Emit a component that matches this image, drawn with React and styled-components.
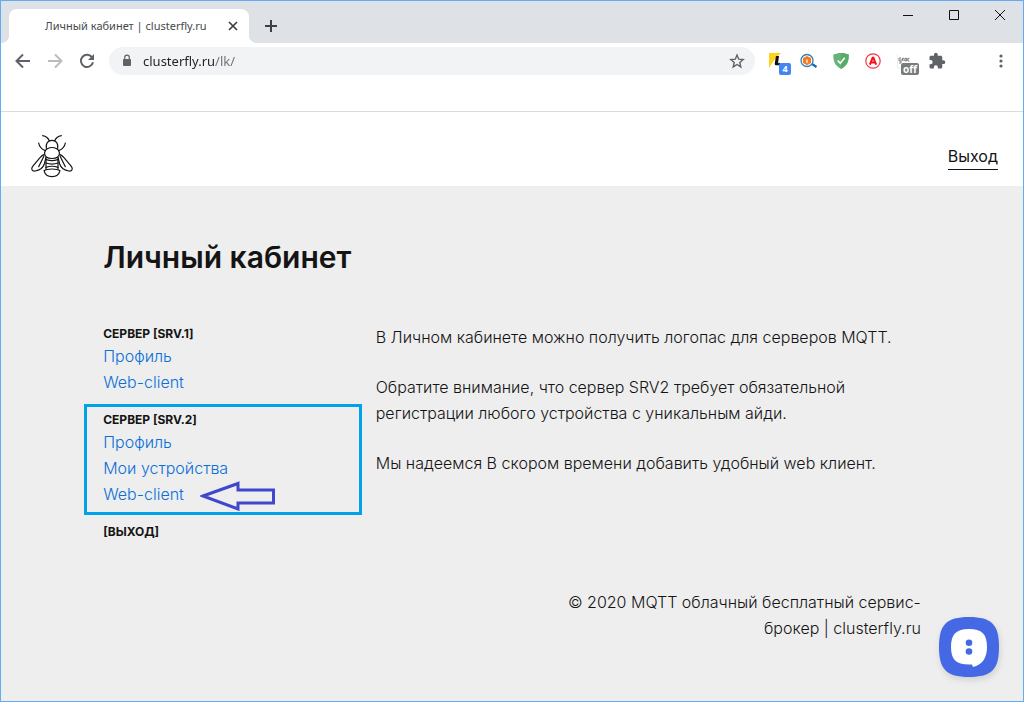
import React from 'react';
import styled, { createGlobalStyle } from 'styled-components';

const GlobalStyle = createGlobalStyle`
  *, *::before, *::after { box-sizing: border-box; }
  body { margin: 0; background: #eeeeee; }
  button { border: 0; padding: 0; background: none; font: inherit; color: inherit; cursor: pointer; }
  svg { display: block; }
`;

const chromeFont = '"Noto Sans", "Open Sans", sans-serif';

const Window = styled.div`
  display: flex;
  flex-direction: column;
  min-height: 100vh;
  border: 1px solid #62acf3;
  background: #eeeeee;
`;

const TabStrip = styled.div`
  display: flex;
  height: 42px;
  padding: 8px 0 0 8px;
  background: #dee1e6;
  font-family: ${chromeFont};
`;

const Tab = styled.div`
  position: relative;
  display: flex;
  align-items: center;
  justify-content: space-between;
  width: 240px;
  padding: 0 8px 0 36px;
  border-radius: 8px 8px 0 0;
  background: #ffffff;
  color: #45494d;
  font-size: 11px;
  line-height: 16px;
  white-space: nowrap;

  &::before, &::after {
    content: '';
    position: absolute;
    bottom: 0;
    width: 8px;
    height: 8px;
  }
  &::before {
    right: 100%;
    background: radial-gradient(circle at 0 0, transparent 8px, #ffffff 8px);
  }
  &::after {
    left: 100%;
    background: radial-gradient(circle at 100% 0, transparent 8px, #ffffff 8px);
  }
`;

const IconButton = styled.button`
  display: flex;
  align-items: center;
  justify-content: center;
  flex: none;
  width: ${p => p.$width || 32}px;
  height: ${p => p.$height || 28}px;
`;

const TabClose = styled(IconButton)`
  width: 16px;
  height: 16px;
`;

const NewTab = styled(IconButton)`
  width: 28px;
  height: 34px;
  margin-left: 8px;
`;

const WindowControls = styled.div`
  display: flex;
  margin: -8px 0 0 auto;
`;

const Toolbar = styled.div`
  display: flex;
  align-items: center;
  height: 68px;
  padding: 0 6px 32px;
  background: #ffffff;
  font-family: ${chromeFont};
`;

const AddressBar = styled.label`
  display: flex;
  align-items: center;
  flex: 1;
  min-width: 0;
  height: 28px;
  margin-left: 6px;
  padding: 0 2px 0 12px;
  border-radius: 14px;
  background: #f1f3f4;
`;

const AddressInput = styled.input`
  flex: 1;
  min-width: 0;
  margin-left: 10px;
  padding: 0;
  border: 0;
  outline: 0;
  font-family: inherit;
  font-size: 13px;
  line-height: 20px;
  color: transparent;
  background: linear-gradient(90deg, #202124 72px, #6b7075 72px);
  background-clip: text;
  -webkit-background-clip: text;
`;

const Extensions = styled.div`
  display: flex;
  margin-left: 6px;
`;

const ExtensionButton = styled(IconButton)`
  position: relative;
`;

const Badge = styled.span`
  position: absolute;
  left: ${p => (p.$wide ? 12 : 18)}px;
  bottom: 0;
  min-width: 12px;
  height: 12px;
  padding: 0 2px;
  border-radius: 2px;
  background: ${p => p.$color};
  color: #ffffff;
  font-family: "Open Sans", sans-serif;
  font-size: ${p => (p.$wide ? 10 : 9)}px;
  font-weight: 700;
  line-height: 12px;
`;

const MenuButton = styled(IconButton)`
  margin-left: 32px;
`;

const SiteHeader = styled.header`
  display: flex;
  align-items: center;
  justify-content: space-between;
  height: 75px;
  padding: 14px 25px 0 29px;
  border-top: 1px solid #d9dbde;
  background: #ffffff;
`;

const ExitLink = styled.a`
  border-bottom: 1px solid #141414;
  color: #141414;
  font-family: Inter, sans-serif;
  font-size: 16px;
  line-height: 26px;
  text-decoration: none;
`;

const Page = styled.div`
  padding: 52px 10% 32px;
  color: #141414;
  font-family: Inter, sans-serif;
  font-size: 16px;
  font-weight: 300;
  line-height: 26px;
`;

const Title = styled.h1`
  margin: 0 0 48px;
  font-size: 30px;
  font-weight: 600;
  line-height: 38px;
`;

const Columns = styled.div`
  display: grid;
  grid-template-columns: 1fr 2fr;
`;

const SideNav = styled.nav`
  display: flex;
  flex-direction: column;
  gap: 15px;
`;

const NavGroup = styled.section`
  position: relative;
`;

const NavHeading = styled.h2`
  margin: 0;
  font-size: 12px;
  font-weight: 700;
  line-height: 19px;
`;

const NavList = styled.ul`
  margin: 0;
  padding: 0;
  list-style: none;
`;

const NavLink = styled.a`
  color: #0b6fd8;
  text-decoration: none;
`;

const PlainLink = styled.a`
  color: inherit;
  text-decoration: none;
`;

const Highlight = styled.div`
  position: absolute;
  inset: -6px 14px -8px -19px;
  border: 3px solid #00a2e8;
  pointer-events: none;
`;

const PointerArrow = styled.svg`
  position: absolute;
  left: 97px;
  bottom: -4px;
  pointer-events: none;
`;

const Article = styled.main`
  p { margin: 0 0 24px; }
`;

const Footer = styled.footer`
  width: 48%;
  margin: 48px 0 0 auto;
  text-align: right;
`;

const ChatButton = styled.button`
  position: fixed;
  right: 25px;
  bottom: 25px;
  filter: drop-shadow(1px 3px 3px rgba(0, 0, 0, 0.12));
`;

const BackIcon = ({ color, flip }) => (
  <svg width="16" height="16" viewBox="0 0 16 16" fill="none" stroke={color} strokeWidth="2">
    <path d={flip ? 'M1 8h13M8 1.5L14.5 8L8 14.5' : 'M15 8H2M8 1.5L1.5 8L8 14.5'} />
  </svg>
);

const ReloadIcon = () => (
  <svg width="16" height="16" viewBox="0 0 16 16">
    <path d="M13.2 4.6A6.1 6.1 0 1 0 14 9.2" fill="none" stroke="#5f6368" strokeWidth="2" />
    <path d="M15 1v6H9z" fill="#5f6368" />
  </svg>
);

const LockIcon = () => (
  <svg width="12" height="14" viewBox="0 0 12 14">
    <rect x="2" y="5" width="8" height="7" rx="1" fill="#5f6368" />
    <path d="M3.7 5.5V3.4a2.3 2.3 0 0 1 4.6 0v2.1" fill="none" stroke="#5f6368" strokeWidth="1.2" />
  </svg>
);

const StarIcon = () => (
  <svg width="16" height="16" viewBox="0 0 16 16" fill="none" stroke="#5f6368" strokeWidth="1.4">
    <path d="M8 2l1.7 4.2 4.5.4-3.4 2.9 1 4.4L8 11.5l-3.8 2.4 1-4.4-3.4-2.9 4.5-.4z" />
  </svg>
);

const YandexIcon = () => (
  <svg width="16" height="16" viewBox="0 0 16 16">
    <path d="M0 0h12L4.500 8 0 15z" fill="#ffd21c" />
    <path d="M7 3h3L9 10.200l2-.4v2.500H7.500C6 12.300 5.600 11.400 5.800 10z" fill="#111111" />
  </svg>
);

const BoxSearchIcon = () => (
  <svg width="18" height="16" viewBox="0 0 18 16">
    <path d="M11.200 10.300L16.500 14" stroke="#1269b0" strokeWidth="2.200" />
    <circle cx="7" cy="7.500" r="6" fill="#ffffff" stroke="#2f7fbd" strokeWidth="1.300" />
    <path d="M7 3l4 2.100v4.800l-4 2.300-4-2.300V5.100z" fill="#f47b20" />
    <path d="M7 6.500v3.500" stroke="#ffffff" strokeWidth="1.200" />
  </svg>
);

const ShieldIcon = () => (
  <svg width="16" height="16" viewBox="0 0 16 16">
    <path d="M8 0c2.500 0 5 .7 7.700 1.600 0 6-.6 10.500-7.700 14.400C.9 12.100.3 7.600.3 1.600 3 .7 5.500 0 8 0z" fill="#67b279" />
    <path d="M8 0c2.500 0 5 .7 7.700 1.600 0 6-.6 10.500-7.700 14.400z" fill="#56ab66" />
    <path d="M4.700 7.700l2.600 2.500 4.400-5.400" fill="none" stroke="#ffffff" strokeWidth="1.600" />
  </svg>
);

const CircleAIcon = () => (
  <svg width="16" height="16" viewBox="0 0 16 16">
    <circle cx="8" cy="8" r="7.200" fill="#ffffff" stroke="#f5333f" strokeWidth="1.200" />
    <path d="M4.900 11.600L7.600 4.800h.8l2.700 6.800M5.900 9.400h4.200" fill="none" stroke="#f5101c" strokeWidth="2" />
  </svg>
);

const ScribbleIcon = () => (
  <svg width="16" height="16" viewBox="0 0 16 16" fill="none">
    <path d="M.5 1v14H13" stroke="#eeeeee" />
    <path d="M4 5H2v3h2V5.500M4 8v2H2M5.500 8V5.300H7V8M8 5.300V8h1.500V5.300zM12.500 5.300H11V8h1.500M10 5v3" stroke="#77797c" strokeWidth=".9" />
  </svg>
);

const PuzzleIcon = () => (
  <svg width="18" height="18" viewBox="0 0 24 24" fill="#5f6368">
    <path d="M20.500 11H19V7c0-1.100-.9-2-2-2h-4V3.500a2.500 2.500 0 0 0-5 0V5H4c-1.100 0-2 .9-2 2v3.800h1.500a2.700 2.700 0 0 1 0 5.400H2V20c0 1.100.9 2 2 2h3.800v-1.500a2.700 2.700 0 0 1 5.400 0V22H17c1.100 0 2-.9 2-2v-4h1.500a2.500 2.500 0 0 0 0-5z" />
  </svg>
);

const BeeLogo = () => (
  <svg width="44" height="44" viewBox="30 26 132 132" fill="none" stroke="#151515" strokeWidth="3.600" strokeLinecap="round" strokeLinejoin="round">
    <path d="M68 31c10 2 16 7 20 15M124 31c-10 2-16 7-20 15" />
    <path d="M79 69c-2-15 5-24 17-24s19 9 17 24" />
    <path d="M56 53c2 12 8 18 20 23M136 53c-2 12-8 18-20 23" />
    <path d="M82 70c8-4 20-4 28 0 10 5 11 18 3 25-7 6-27 6-34 0-8-7-7-20 3-25z" />
    <path d="M73 87c-6 2-9 5-13 10l-22 26c-6 8-2 15 7 14 14-2 24-9 28-21l5-20" />
    <path d="M119 87c6 2 9 5 13 10l22 26c6 8 2 15-7 14-14-2-24-9-28-21l-5-20" />
    <path d="M72 92L56 124M120 92l16 32" />
    <path d="M78 98v34M114 98v34" />
    <path d="M79 103c11 4 23 4 34 0M78 113c11 4 25 4 36 0M78 126c11-4 25-4 36 0" />
    <path d="M72 136c6-4 14-5 24-5s18 1 24 5c-3 12-12 18-24 18s-21-6-24-18z" />
  </svg>
);

const ChatIcon = () => (
  <svg width="60" height="60" viewBox="0 0 60 60">
    <path d="M30 0c23 0 30 8 30 30s-7 30-30 30S0 52 0 30 7 0 30 0z" fill="#4568e5" />
    <path d="M30 12c13 0 18 5 18 18 0 11-5 18-14 20l-1-2.500h-3c-13 0-18-5-18-17.500s5-18 18-18z" fill="#ffffff" />
    <circle cx="30" cy="25.700" r="3.300" fill="#4568e5" />
    <circle cx="30" cy="34.500" r="3.300" fill="#4568e5" />
  </svg>
);

const Stroke = ({ size, d, width = 1, color = '#111111' }) => (
  <svg width={size} height={size} viewBox={`0 0 ${size} ${size}`} fill="none" stroke={color} strokeWidth={width}>
    <path d={d} />
  </svg>
);

const groups = [
  { title: 'СЕРВЕР [SRV.1]', links: ['Профиль', 'Web-client'] },
  { title: 'СЕРВЕР [SRV.2]', links: ['Профиль', 'Мои устройства', 'Web-client'], marked: true },
];

export default function App() {
  return (
    <Window>
      <GlobalStyle />
      <TabStrip>
        <Tab>
          Личный кабинет | clusterfly.ru
          <TabClose aria-label="Закрыть вкладку">
            <Stroke size={10} d="M1 1l8 8M9 1l-8 8" width={1.7} color="#3c4043" />
          </TabClose>
        </Tab>
        <NewTab aria-label="Новая вкладка">
          <Stroke size={12} d="M6 0v12M0 6h12" width={2} color="#3c4043" />
        </NewTab>
        <WindowControls>
          <IconButton $width={46} aria-label="Свернуть"><Stroke size={10} d="M0 5.500h10" /></IconButton>
          <IconButton $width={46} aria-label="Развернуть"><Stroke size={10} d="M.5.5h9v9h-9z" /></IconButton>
          <IconButton $width={46} aria-label="Закрыть"><Stroke size={10} d="M0 0l10 10M10 0L0 10" /></IconButton>
        </WindowControls>
      </TabStrip>

      <Toolbar>
        <IconButton aria-label="Назад"><BackIcon color="#5f6368" /></IconButton>
        <IconButton aria-label="Вперёд"><BackIcon color="#babcbe" flip /></IconButton>
        <IconButton aria-label="Обновить"><ReloadIcon /></IconButton>
        <AddressBar>
          <LockIcon />
          <AddressInput aria-label="Адрес" defaultValue="clusterfly.ru/lk/" />
          <IconButton aria-label="В закладки"><StarIcon /></IconButton>
        </AddressBar>
        <Extensions>
          <ExtensionButton aria-label="Расширение 1"><YandexIcon /><Badge $color="#4285f4">4</Badge></ExtensionButton>
          <ExtensionButton aria-label="Расширение 2"><BoxSearchIcon /></ExtensionButton>
          <ExtensionButton aria-label="Расширение 3"><ShieldIcon /></ExtensionButton>
          <ExtensionButton aria-label="Расширение 4"><CircleAIcon /></ExtensionButton>
          <ExtensionButton aria-label="Расширение 5"><ScribbleIcon /><Badge $color="#7b7b7b" $wide>off</Badge></ExtensionButton>
          <ExtensionButton aria-label="Расширения"><PuzzleIcon /></ExtensionButton>
        </Extensions>
        <MenuButton aria-label="Меню">
          <svg width="4" height="14" viewBox="0 0 4 14" fill="#5f6368">
            <circle cx="2" cy="2" r="1.600" /><circle cx="2" cy="7" r="1.600" /><circle cx="2" cy="12" r="1.600" />
          </svg>
        </MenuButton>
      </Toolbar>

      <SiteHeader>
        <PlainLink href="#home" aria-label="Главная"><BeeLogo /></PlainLink>
        <ExitLink href="#exit">Выход</ExitLink>
      </SiteHeader>

      <Page>
        <Title>Личный кабинет</Title>
        <Columns>
          <SideNav>
            {groups.map(group => (
              <NavGroup key={group.title}>
                <NavHeading>{group.title}</NavHeading>
                <NavList>
                  {group.links.map(link => <li key={link}><NavLink href="#lk">{link}</NavLink></li>)}
                </NavList>
                {group.marked && (
                  <>
                    <Highlight />
                    <PointerArrow width="76" height="30" viewBox="0 0 76 30" fill="none" stroke="#3f48cc" strokeWidth="3">
                      <path d="M3 15L38 2.500V9h35.500v13H38v6z" />
                    </PointerArrow>
                  </>
                )}
              </NavGroup>
            ))}
            <NavHeading><PlainLink href="#exit">[ВЫХОД]</PlainLink></NavHeading>
          </SideNav>
          <Article>
            <p>В Личном кабинете можно получить логопас для серверов MQTT.</p>
            <p>Обратите внимание, что сервер SRV2 требует обязательной регистрации любого устройства с уникальным айди.</p>
            <p>Мы надеемся В скором времени добавить удобный web клиент.</p>
          </Article>
        </Columns>
        <Footer>© 2020 MQTT облачный бесплатный сервис-брокер | clusterfly.ru</Footer>
      </Page>
      <ChatButton aria-label="Открыть чат"><ChatIcon /></ChatButton>
    </Window>
  );
}
